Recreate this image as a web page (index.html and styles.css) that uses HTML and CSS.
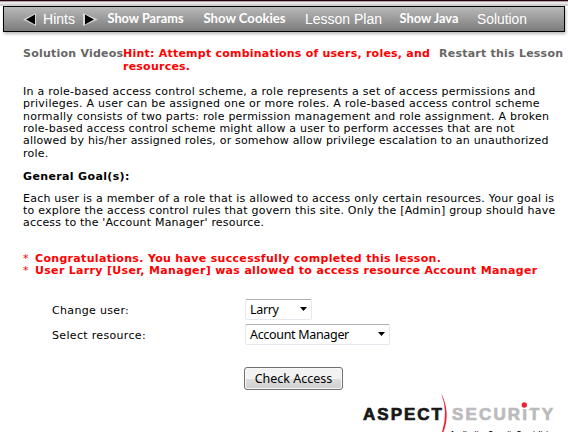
FILE: index.html
```html
<!DOCTYPE html>
<html lang="en">
<head>
<meta charset="utf-8">
<title>Role Based Access Control</title>
<link rel="stylesheet" href="styles.css">
</head>
<body>
<div class="banner"></div>
<nav class="menu">
<svg viewBox="0 0 568 32" width="568" height="32">
<path class="arrow-glow" d="M23 15.500L36 9V22ZM98 15.500L83 9V22Z"/>
<path d="M26 15.500L35 10.500V20.500ZM94 15.500L85 10.500V20.500Z"/>
<g class="nav-plain">
<text x="43" y="20" textLength="32" lengthAdjust="spacingAndGlyphs">Hints</text>
<text x="305" y="20" textLength="77" lengthAdjust="spacingAndGlyphs">Lesson Plan</text>
<text x="477" y="20" textLength="50" lengthAdjust="spacingAndGlyphs">Solution</text>
</g>
<g class="nav-bold">
<text x="107.500" y="19" textLength="76" lengthAdjust="spacingAndGlyphs">Show Params</text>
<text x="203.500" y="19" textLength="82" lengthAdjust="spacingAndGlyphs">Show Cookies</text>
<text x="399.500" y="19" textLength="59" lengthAdjust="spacingAndGlyphs">Show Java</text>
</g>
</svg>
</nav>
<header class="top">
<a class="videos">Solution Videos</a>
<div class="hint"><div>Hint: Attempt combinations of users, roles, and</div><div>resources.</div></div>
<a class="restart">Restart this Lesson</a>
</header>
<main>
<div class="intro">
<div class="wide">In a role-based access control scheme, a role represents a set of access permissions and</div>
<div class="wide">privileges. A user can be assigned one or more roles. A role-based access control scheme</div>
<div>normally consists of two parts: role permission management and role assignment. A broken</div>
<div class="tight">role-based access control scheme might allow a user to perform accesses that are not</div>
<div class="tight">allowed by his/her assigned roles, or somehow allow privilege escalation to an unauthorized</div>
<div>role.</div>
</div>
<h2>General Goal(s):</h2>
<div class="goal">
<div>Each user is a member of a role that is allowed to access only certain resources. Your goal is</div>
<div>to explore the access control rules that govern this site. Only the [Admin] group should have</div>
<div class="tight">access to the 'Account Manager' resource.</div>
</div>
<div class="messages">
<div><span>*</span>Congratulations. You have successfully completed this lesson.</div>
<div><span>*</span>User Larry [User, Manager] was allowed to access resource Account Manager</div>
</div>
<form>
<label>Change user:</label>
<div class="select user">Larry<svg width="7" height="4" viewBox="0 0 7 4"><path d="M0 0H7L3.500 4Z"/></svg></div>
<label>Select resource:</label>
<div class="select resource">Account Manager<svg width="7" height="4" viewBox="0 0 7 4"><path d="M0 0H7L3.500 4Z"/></svg></div>
<button type="button">Check Access</button>
</form>
</main>
<footer>
<svg width="206" height="42" viewBox="362 390 206 42">
<g class="logo">
<text x="363" y="420" textLength="79">ASPECT</text>
<text class="security" x="452" y="420" textLength="101">SECURITY</text>
</g>
<path class="mask" d="M518 403H530V409H518Z"/>
<circle cx="524.300" cy="405" r="2.700"/>
<path class="arc" d="M441 393Q451 412 443.500 432L442 432Q448.500 412 441 393Z"/>
<text class="tagline" x="450" y="435.500" textLength="102" lengthAdjust="spacingAndGlyphs">Application Security Specialists</text>
</svg>
</footer>
</body>
</html>
```
FILE: styles.css
```css
body {
  margin: 0;
  width: 568px;
  height: 432px;
  overflow: hidden;
  background: #fff;
  color: #000;
  font: 11px/12.35px "DejaVu Sans", Verdana, sans-serif;
  letter-spacing: .23px;
  white-space: nowrap;
}
svg { display: block; letter-spacing: 0; }
.banner {
  height: 6px;
  background: linear-gradient(#28000b 0 1px, #b0a6aa 1px 2px, #e8e6e7 2px 4px, #d0d0d0 4px);
}
.menu {
  box-sizing: border-box;
  width: 562px;
  height: 26px;
  margin-left: 3px;
  border: 1px solid #000;
  background: linear-gradient(#b8b8b8, #7c7c7c);
  box-shadow: 1px 2px 3px #bbb;
}
.menu svg { margin: -3px 0 0 -4px; }
.arrow-glow { fill: #d8d8d8; }
.nav-plain, .nav-bold { fill: #fff; }
.nav-plain { font: 14px "Liberation Sans", sans-serif; }
.nav-bold { font: bold 13px Lato, sans-serif; }
.top {
  display: grid;
  grid-template-columns: 100px 316px 130px;
  height: 37px;
  padding: 15px 0 0 23px;
  font-weight: bold;
  font-size: 11px;
  line-height: 13px;
  letter-spacing: .23px;
}
.videos, .restart { color: #666; }
.hint, .messages { color: #f00; }
main { padding-left: 23px; }
h2 {
  margin: 10.5px 0 10px;
  font-size: 11px;
  line-height: 12px;
  letter-spacing: .36px;
}
.intro { padding-top: 2px; }
.wide { letter-spacing: .26px; }
.tight { letter-spacing: .19px; }
.messages {
  margin-top: 23.5px;
  font-weight: bold;
  font-size: 11px;
  letter-spacing: .32px;
}
.messages span {
  display: inline-block;
  width: 12px;
  font-weight: normal;
}
form {
  display: grid;
  grid-template-columns: 193px 150px;
  grid-template-rows: 21px 21px 41px;
  row-gap: 4px;
  margin: 21px 0 0 29px;
}
label { line-height: 23px; letter-spacing: .33px; }
.select {
  box-sizing: border-box;
  display: flex;
  align-items: center;
  justify-content: space-between;
  padding: 0 4px 0 4px;
  border: 1px solid #e3e9ef;
  border-top-color: #abadb3;
  border-radius: 2px;
  font: 12.5px "Noto Sans", sans-serif;
  letter-spacing: -.32px;
}
.user { width: 67px; }
.resource { width: 145px; }
button {
  grid-column: 2;
  width: 99px;
  height: 23px;
  margin: 18px 0 0 -1px;
  padding: 0;
  border: 1px solid #707070;
  border-radius: 3px;
  background: linear-gradient(#f2f2f2 0 50%, #dedede 50%, #cfcfcf);
  box-shadow: inset 0 0 0 1px #f8f8f8;
  font: 12.5px "Noto Sans", sans-serif;
}
footer { margin: 0 0 0 362px; }
.logo { font: 900 17px "Liberation Sans", sans-serif; fill: #171717; stroke: #171717; stroke-width: .7px; }
.logo .security { fill: #bbb; stroke: #bbb; }
.mask { fill: #fff; }
circle, .arc { fill: #ed2435; stroke: none; }
.tagline { font: bold 7px "Liberation Sans", sans-serif; }
```
